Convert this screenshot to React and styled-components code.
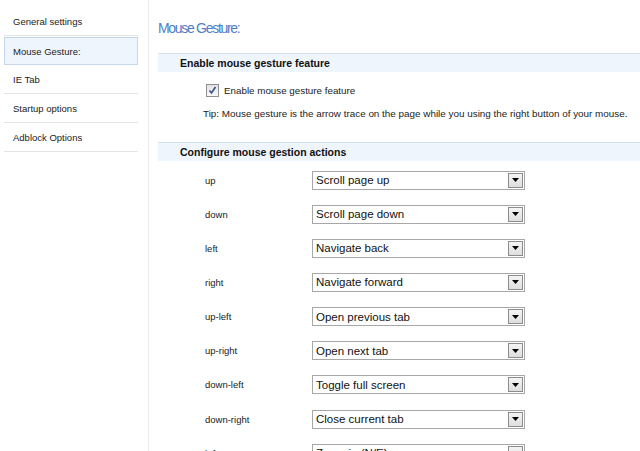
import React from "react";
import styled, { createGlobalStyle } from "styled-components";

const Global = createGlobalStyle`
  html, body { margin: 0; padding: 0; overflow: hidden; background: #fff; }
  body { font-family: "Liberation Sans", Arial, sans-serif; color: #222; }
`;

const Page = styled.div`
  display: flex;
  height: 451px;
  overflow: hidden;
`;

const Sidebar = styled.nav`
  flex: none;
  width: 149px;
  box-sizing: border-box;
  border-right: 1px solid #ececec;
  padding: 7px 0 0 4px;
`;

const NavItem = styled.div`
  width: 134px;
  box-sizing: border-box;
  height: ${(p) => (p.$active ? "28px" : "29px")};
  margin-top: ${(p) => (p.$active ? "1px" : "0")};
  display: flex;
  align-items: center;
  padding-left: ${(p) => (p.$active ? "8px" : "9px")};
  font-size: 9.5px;
  color: #222;
  background: ${(p) => (p.$active ? "#eef5fd" : "transparent")};
  border: ${(p) => (p.$active ? "1px solid #c6d7ec" : "none")};
  border-bottom: 1px solid ${(p) => (p.$active ? "#c6d7ec" : "#e4e4e4")};
`;

const Main = styled.main`
  flex: 1;
  padding-left: 9px;
  min-width: 0;
`;

const Title = styled.h1`
  margin: 0 0 15px;
  padding-top: 18px;
  font-weight: normal;
  font-size: 14px;
  line-height: 20px;
  letter-spacing: -1.3px;
  color: #4f7ec6;
`;

const Band = styled.div`
  border-top: 1px solid #d5e1ef;
  background: #eef5fd;
  height: 18px;
  line-height: 18px;
  padding-left: 22px;
  font-size: 10.5px;
  font-weight: bold;
  color: #111;
  margin-top: ${(p) => p.$mt || "0"};
`;

const CheckRow = styled.label`
  display: flex;
  align-items: center;
  gap: 5px;
  margin: 12px 0 0 48px;
  height: 13px;
  font-size: 9.8px;
  color: #222;
`;

const CheckBox = styled.span`
  width: 11px;
  height: 11px;
  border: 1px solid #8e8f8f;
  background: linear-gradient(#e4e4e4, #f7f7f7);
  display: flex;
  align-items: center;
  justify-content: center;
`;

const Tip = styled.p`
  margin: 10px 0 0 45px;
  font-size: 9.9px;
  line-height: 13px;
  color: #222;
`;

const Rows = styled.div`
  margin-top: 2px;
  display: grid;
  grid-template-columns: 107px 213px;
  grid-auto-rows: 34.15px;
  padding-left: 47px;
  align-items: center;
`;

const RowLabel = styled.span`
  font-size: 9.5px;
  color: #222;
`;

const Select = styled.div`
  height: 19px;
  box-sizing: border-box;
  border: 1px solid #a7a7a7;
  display: flex;
  align-items: center;
  justify-content: space-between;
  padding-left: 3px;
  padding-right: 1px;
  font-size: 11.5px;
  color: #111;
  background: #fff;
`;

const DropBtn = styled.span`
  width: 15px;
  height: 15px;
  box-sizing: border-box;
  border: 1px solid #8c8c8c;
  background: linear-gradient(#f4f4f4, #dedede);
  display: flex;
  align-items: center;
  justify-content: center;
`;

const navItems = ["General settings", "Mouse Gesture:", "IE Tab", "Startup options", "Adblock Options"];

const actions = [
  ["up", "Scroll page up"],
  ["down", "Scroll page down"],
  ["left", "Navigate back"],
  ["right", "Navigate forward"],
  ["up-left", "Open previous tab"],
  ["up-right", "Open next tab"],
  ["down-left", "Toggle full screen"],
  ["down-right", "Close current tab"],
  ["left-up", "Zoom in (N/E)"],
];

export default function App() {
  return (
    <>
      <Global />
      <Page>
        <Sidebar>
          {navItems.map((n, i) => (
            <NavItem key={n} $active={i === 1}>{n}</NavItem>
          ))}
        </Sidebar>
        <Main>
          <Title>Mouse Gesture:</Title>
          <Band>Enable mouse gesture feature</Band>
          <CheckRow>
            <CheckBox>
              <svg width="9" height="9" viewBox="0 0 9 9">
                <path d="M1.5 4.5 L3.5 7 L7.5 1" fill="none" stroke="#3a4f8a" strokeWidth="1.6" />
              </svg>
            </CheckBox>
            Enable mouse gesture feature
          </CheckRow>
          <Tip>Tip: Mouse gesture is the arrow trace on the page while you using the right button of your mouse.</Tip>
          <Band $mt="22px">Configure mouse gestion actions</Band>
          <Rows>
            {actions.map(([k, v]) => (
              <React.Fragment key={k}>
                <RowLabel>{k}</RowLabel>
                <Select>
                  {v}
                  <DropBtn>
                    <svg width="7" height="4" viewBox="0 0 7 4">
                      <path d="M0 0 H7 L3.5 4 Z" fill="#000" />
                    </svg>
                  </DropBtn>
                </Select>
              </React.Fragment>
            ))}
          </Rows>
        </Main>
      </Page>
    </>
  );
}
